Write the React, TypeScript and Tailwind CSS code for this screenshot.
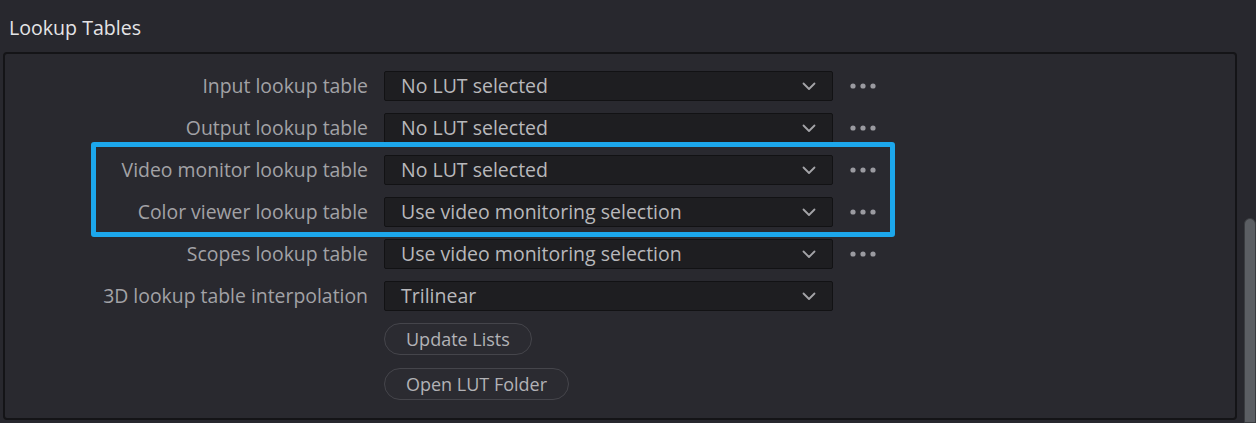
import React from "react";

const rows: { label: string; value: string; dots: boolean }[] = [
  { label: "Input lookup table", value: "No LUT selected", dots: true },
  { label: "Output lookup table", value: "No LUT selected", dots: true },
  { label: "Video monitor lookup table", value: "No LUT selected", dots: true },
  { label: "Color viewer lookup table", value: "Use video monitoring selection", dots: true },
  { label: "Scopes lookup table", value: "Use video monitoring selection", dots: true },
  { label: "3D lookup table interpolation", value: "Trilinear", dots: false },
];

function Chevron() {
  return (
    <svg width="14" height="9" viewBox="0 0 14 9" fill="none">
      <path d="M1.5 1.5 L7 7 L12.5 1.5" stroke="#a4a4a8" strokeWidth="1.8" strokeLinecap="round" strokeLinejoin="round" />
    </svg>
  );
}

function Dots() {
  return (
    <svg width="28" height="8" viewBox="0 0 28 8">
      <circle cx="3" cy="4" r="2.6" fill="#9a9aa0" />
      <circle cx="13" cy="4" r="2.6" fill="#9a9aa0" />
      <circle cx="23" cy="4" r="2.6" fill="#9a9aa0" />
    </svg>
  );
}

export default function App() {
  return (
    <div
      className="relative flex h-[423px] w-[1256px] overflow-hidden bg-[#28282e]"
      style={{ fontFamily: '"Open Sans", "Noto Sans", sans-serif' }}
    >
      <div className="flex w-[1244px] flex-col">
        <div className="pl-[9px] pt-[15px] text-[19.6px] leading-[26px] text-[#e4e4e6]">Lookup Tables</div>
        <div className="ml-[3px] mt-[11px] h-[368px] w-[1234px] rounded-[4px] border-2 border-[#141417] bg-[#29292f] pt-[17px]">
          <div className="flex flex-col gap-[12px]">
            {rows.map((r) => (
              <div key={r.label} className="flex h-[30px] items-center">
                <div className="w-[363px] text-right text-[19.4px] leading-[26px] text-[#a2a2a6]">{r.label}</div>
                <div className="ml-[16px] flex h-[30px] w-[449px] items-center justify-between rounded-[2px] border border-[#121214] bg-[#1e1e21] pl-[16px] pr-[16px]">
                  <span className="text-[19.5px] leading-[26px] text-[#b8b8bb]">{r.value}</span>
                  <Chevron />
                </div>
                {r.dots && (
                  <div className="ml-[17px] flex items-center">
                    <Dots />
                  </div>
                )}
              </div>
            ))}
          </div>
          <div className="ml-[379px] mt-[12px] flex flex-col items-start gap-[13px]">
            <button className="h-[32px] rounded-full border border-[#45454b] bg-[#2b2b31] px-[21px] text-[18px] leading-[24px] text-[#b2b2b6]">
              Update Lists
            </button>
            <button className="h-[32px] rounded-full border border-[#45454b] bg-[#2b2b31] px-[21px] text-[18px] leading-[24px] text-[#b2b2b6]">
              Open LUT Folder
            </button>
          </div>
        </div>
      </div>
      <div className="flex w-[12px] flex-col pt-[218px]">
        <div className="flex-1 rounded-t-[6px] border border-[#3a3c40] bg-[#5b5e63]" />
      </div>
      <div className="pointer-events-none absolute left-[91px] top-[142px] h-[95px] w-[804px] rounded-[3px] border-[5px] border-[#1ca7ec]" />
    </div>
  );
}
